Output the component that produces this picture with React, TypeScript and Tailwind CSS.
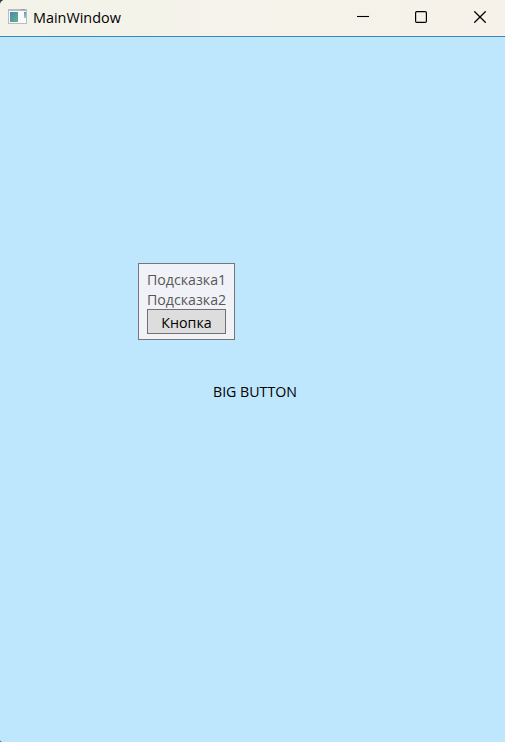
import React from "react";

function AppIcon() {
  return (
    <svg width="20" height="16" viewBox="0 0 20 16" shapeRendering="crispEdges" className="shrink-0">
      <defs>
        <linearGradient id="pane" x1="0" y1="0" x2="1" y2="1">
          <stop offset="0" stopColor="#4a83b4" />
          <stop offset="1" stopColor="#62b583" />
        </linearGradient>
        <linearGradient id="bar" x1="0" y1="0" x2="0" y2="1">
          <stop offset="0" stopColor="#5f93cf" />
          <stop offset="1" stopColor="#8fd8ae" />
        </linearGradient>
      </defs>
      <rect x="0" y="0" width="19" height="15" fill="#b9bbc2" />
      <rect x="1" y="2" width="17" height="12" fill="#fbfbfd" />
      <rect x="13" y="0" width="4" height="1" fill="#9a9da6" />
      <rect x="2" y="3" width="8" height="10" fill="url(#pane)" />
      <rect x="16" y="3" width="2" height="6" fill="url(#bar)" />
    </svg>
  );
}

function TitleBar() {
  return (
    <header className="flex h-[37px] shrink-0 items-start border-b border-[#3c87b8] bg-gradient-to-r from-[#f3f3ea] to-[#f6f2ea] pl-2">
      <div className="pt-[9px]">
        <AppIcon />
      </div>
      <h1 className="ml-[5px] mt-[7px] origin-left scale-x-[0.96] whitespace-nowrap text-[15px] leading-5 text-black">
        MainWindow
      </h1>
      <div className="ml-auto flex h-[34px] items-center">
        <button aria-label="Minimize" className="flex h-full w-[58px] items-center justify-center">
          <svg width="12" height="12" viewBox="0 0 12 12" stroke="#000" fill="none">
            <path d="M0 5.5H12" strokeWidth="1.1" />
          </svg>
        </button>
        <button aria-label="Maximize" className="flex h-full w-[58px] items-center justify-center">
          <svg width="12" height="12" viewBox="0 0 12 12" stroke="#000" fill="none">
            <rect x="0.6" y="0.6" width="10.8" height="10.8" rx="1.2" strokeWidth="1.2" />
          </svg>
        </button>
        <button aria-label="Close" className="flex h-full w-[55px] items-center justify-center pl-1">
          <svg width="12" height="12" viewBox="0 0 12 12" stroke="#000" fill="none">
            <path d="M0.3 0.3L11.7 11.7M11.7 0.3L0.3 11.7" strokeWidth="1.25" />
          </svg>
        </button>
      </div>
    </header>
  );
}

function Hint() {
  return (
    <div className="ml-[138px] mt-[226px] flex h-[77px] w-[97px] flex-col border border-[#767676] bg-[#f1f2f7] px-2 pt-[5px] text-[15px] leading-5 text-[#575757]">
      <span className="origin-left scale-x-[0.945] whitespace-nowrap">Подсказка1</span>
      <span className="origin-left scale-x-[0.945] whitespace-nowrap">Подсказка2</span>
      <button className="flex h-[25px] w-[79px] items-center justify-center whitespace-nowrap border border-[#707070] bg-[#dddddd] text-black">
        <span className="scale-x-[0.95]">Кнопка</span>
      </button>
    </div>
  );
}

export default function App() {
  return (
    <div className="bg-[#3a3a3a]">
      <div className="flex h-[742px] w-[505px] flex-col overflow-hidden rounded-tl-[5px] rounded-bl-[2px] bg-[#bee6fd] font-['Open_Sans','Noto_Sans',sans-serif]">
        <TitleBar />
        <main className="flex flex-1 flex-col">
          <Hint />
          <div className="mt-[41px] flex pl-[212.5px] text-[15px] leading-5 text-black">
            <span className="origin-left scale-x-[0.945] whitespace-nowrap">BIG BUTTON</span>
          </div>
        </main>
      </div>
    </div>
  );
}
